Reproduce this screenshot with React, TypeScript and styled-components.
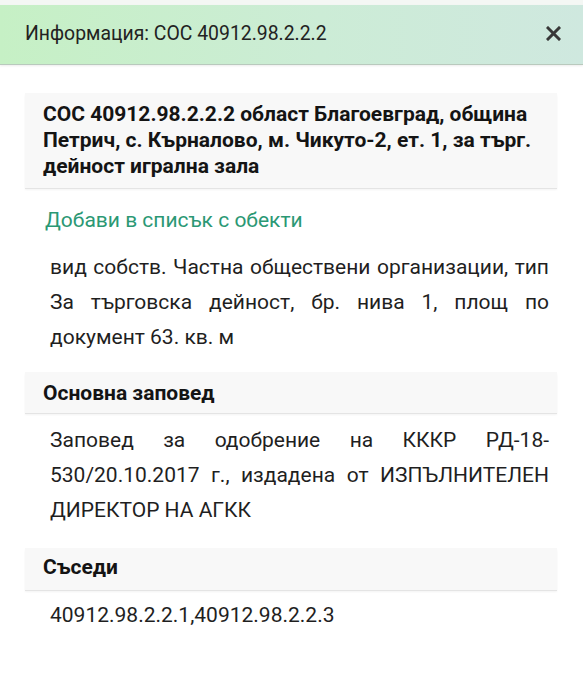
import styled, { createGlobalStyle } from "styled-components";

const GlobalStyle = createGlobalStyle`
  body {
    margin: 0;
    background: #fff;
    font-family: Roboto, "Noto Sans", "Liberation Sans", sans-serif;
    color: #1f1f1f;
  }
`;

const Page = styled.div`
  width: 583px;
  min-height: 700px;
  background: #fff;
  overflow: hidden;
`;

const TopEdge = styled.div`
  height: 5px;
  background: #f4f7f4;
`;

const Header = styled.div`
  height: 56px;
  display: flex;
  align-items: center;
  justify-content: space-between;
  padding: 0 22px 3px 25px;
  background: linear-gradient(90deg, #c6f0c5 0%, #ccecd6 55%, #cfe8df 100%);
  border-bottom: 1px solid #b9c9bd;
  box-shadow: 0 1px 2px rgba(0, 0, 0, 0.08);
`;

const HeaderTitle = styled.div`
  font-size: 19.4px;
  color: #222;
`;

const CloseButton = styled.button`
  border: 0;
  background: none;
  padding: 0;
  display: flex;
  cursor: pointer;
  stroke: #383838;
`;

const Body = styled.div`
  padding: 28px 26px 0 25px;
`;

const SectionHead = styled.div<{ $pad?: string }>`
  background: #f8f8f8;
  padding: ${({ $pad }) => $pad || "8px 18px 9px"};
  font-weight: 700;
  font-size: 21px;
  line-height: 26px;
  color: #141414;
  box-shadow: 0 1px 0 #e4e4e4, 0 2px 2px rgba(0, 0, 0, 0.05);
`;

const LinkText = styled.a`
  display: block;
  margin: 19px 0 0 20px;
  font-size: 21px;
  line-height: 26px;
  color: #2b9874;
  text-decoration: none;
`;

const Para = styled.p<{ $top: number; $bottom: number }>`
  margin: ${({ $top }) => $top}px 8px ${({ $bottom }) => $bottom}px 25px;
  font-size: 21px;
  line-height: 35px;
  text-align: justify;
  color: #1f1f1f;
`;

const CloseIcon = () => (
  <svg width="15" height="15" viewBox="0 0 15 15" fill="none">
    <path d="M2 2l11 11M13 2L2 13" strokeWidth="3" strokeLinecap="square" />
  </svg>
);

export default function App() {
  return (
    <Page>
      <GlobalStyle />
      <TopEdge />
      <Header>
        <HeaderTitle>Информация: СОС 40912.98.2.2.2</HeaderTitle>
        <CloseButton aria-label="close">
          <CloseIcon />
        </CloseButton>
      </Header>
      <Body>
        <SectionHead>
          СОС 40912.98.2.2.2 област Благоевград, община Петрич, с. Кърналово,
          м. Чикуто-2, ет. 1, за търг. дейност игрална зала
        </SectionHead>
        <LinkText href="#">Добави в списък с обекти</LinkText>
        <Para $top={17} $bottom={17}>
          вид собств. Частна обществени организации, тип За търговска дейност,
          бр. нива 1, площ по документ 63. кв. м
        </Para>
        <SectionHead $pad="8px 18px 7px">Основна заповед</SectionHead>
        <Para $top={10} $bottom={20}>
          Заповед за одобрение на КККР РД-18-530/20.10.2017 г., издадена от
          ИЗПЪЛНИТЕЛЕН ДИРЕКТОР НА АГКК
        </Para>
        <SectionHead $pad="6px 18px 10px">Съседи</SectionHead>
        <Para $top={8} $bottom={0}>
          40912.98.2.2.1,40912.98.2.2.3
        </Para>
      </Body>
    </Page>
  );
}
